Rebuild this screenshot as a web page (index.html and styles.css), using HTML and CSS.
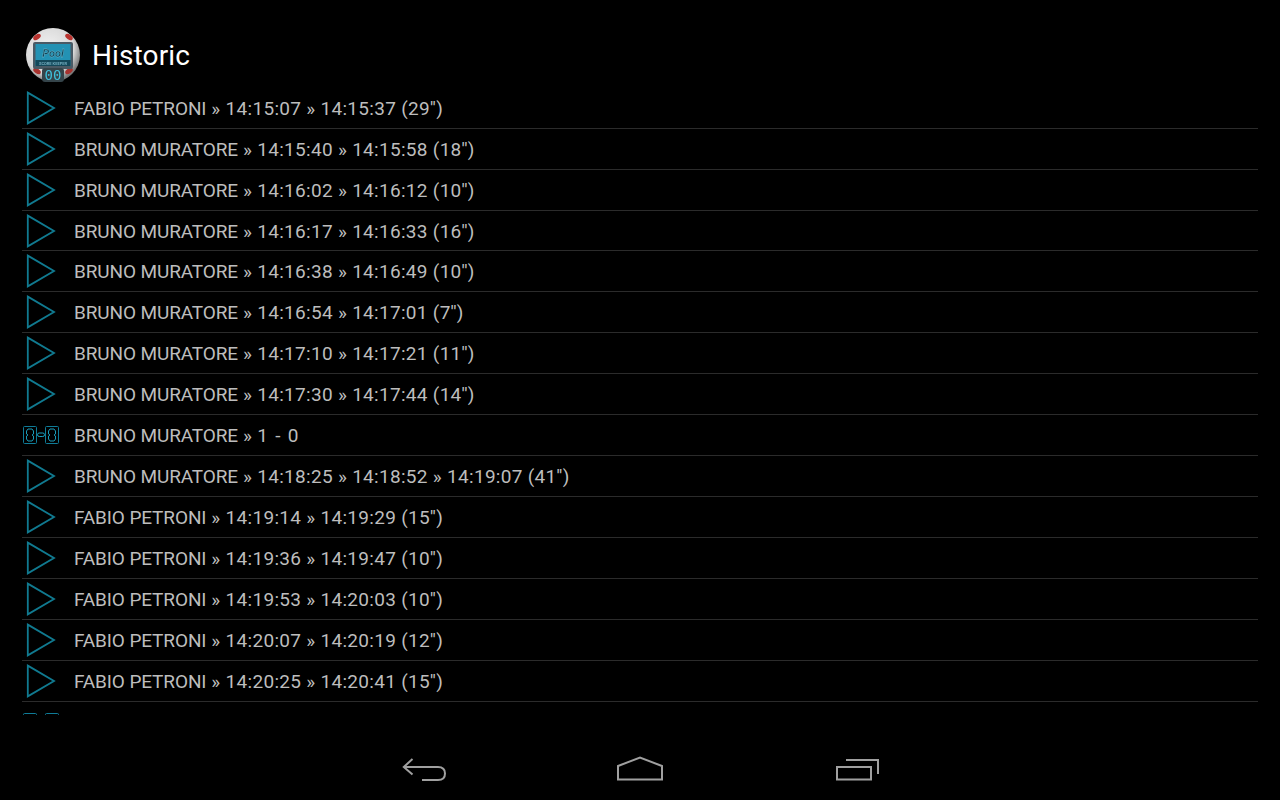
FILE: index.html
```html
<!DOCTYPE html>
<html lang="en">
<head>
  <meta charset="UTF-8">
  <title>Historic</title>
  <link rel="stylesheet" href="styles.css">
</head>
<body>
  <svg class="defs" width="0" height="0">
    <symbol id="play" viewBox="0 0 30 34">
      <path d="M1.8 1.6 L28 17 L1.8 32.4 Z" fill="none" stroke="#107a90" stroke-width="1.8"/>
    </symbol>
    <symbol id="score" viewBox="0 0 36 18">
      <g fill="none" stroke="#0f7c98" stroke-width="1">
        <rect x="0.5" y="0.5" width="13" height="17" rx="1"/>
        <path d="M5 3 H9 L10.5 5 V8 L9 9 L10.5 10 V13 L9 15 H5 L3.5 13 V10 L5 9 L3.5 8 V5 Z" stroke="#1a9bb8"/>
        <rect x="22.5" y="0.5" width="13" height="17" rx="1"/>
        <path d="M27 3 H31 L32.5 5 V8 L31 9 L32.5 10 V13 L31 15 H27 L25.5 13 V10 L27 9 L25.5 8 V5 Z" stroke="#1a9bb8"/>
        <rect x="14.5" y="7" width="7" height="3.5" rx="1.7" stroke="#1aa0bf"/>
      </g>
    </symbol>
  </svg>

  <header class="action-bar">
    <svg class="logo" width="56" height="56" viewBox="0 0 56 56">
      <defs>
        <radialGradient id="ball" cx="42%" cy="38%" r="62%">
          <stop offset="0" stop-color="#f2f2f2"/>
          <stop offset="0.75" stop-color="#d8d8d8"/>
          <stop offset="1" stop-color="#777"/>
        </radialGradient>
      </defs>
      <circle cx="28" cy="28" r="27" fill="url(#ball)"/>
      <ellipse cx="12" cy="10" rx="4.2" ry="2.5" fill="#b8322e" transform="rotate(-35 12 10)"/>
      <ellipse cx="44" cy="10" rx="4.2" ry="2.5" fill="#b8322e" transform="rotate(35 44 10)"/>
      <ellipse cx="12" cy="44" rx="4.2" ry="2.5" fill="#a8322e" transform="rotate(35 12 44)"/>
      <ellipse cx="44" cy="44" rx="4.2" ry="2.5" fill="#a8322e" transform="rotate(-35 44 44)"/>
      <rect x="8" y="15" width="40" height="27" rx="2" fill="#4a5a65"/>
      <rect x="10.5" y="17" width="35" height="22" fill="#2392b4"/>
      <rect x="10.5" y="33" width="35" height="6" fill="#14485a"/>
      <text x="28" y="30" class="logo-title" text-anchor="middle">Pool</text>
      <text x="28" y="38" class="logo-sub" text-anchor="middle">SCORE KEEPER</text>
      <rect x="17" y="41" width="22" height="14" rx="3" fill="#35444a"/>
      <text x="28" y="53" class="logo-digits" text-anchor="middle">00</text>
    </svg>
    <h1>Historic</h1>
  </header>

  <ul class="history">
    <li><svg class="ico"><use href="#play"/></svg><span class="txt"><span class="name">FABIO PETRONI</span> » 14:15:07 » 14:15:37 (29'')</span></li>
    <li><svg class="ico"><use href="#play"/></svg><span class="txt"><span class="name">BRUNO MURATORE</span> » 14:15:40 » 14:15:58 (18'')</span></li>
    <li><svg class="ico"><use href="#play"/></svg><span class="txt"><span class="name">BRUNO MURATORE</span> » 14:16:02 » 14:16:12 (10'')</span></li>
    <li><svg class="ico"><use href="#play"/></svg><span class="txt"><span class="name">BRUNO MURATORE</span> » 14:16:17 » 14:16:33 (16'')</span></li>
    <li><svg class="ico"><use href="#play"/></svg><span class="txt"><span class="name">BRUNO MURATORE</span> » 14:16:38 » 14:16:49 (10'')</span></li>
    <li><svg class="ico"><use href="#play"/></svg><span class="txt"><span class="name">BRUNO MURATORE</span> » 14:16:54 » 14:17:01 (7'')</span></li>
    <li><svg class="ico"><use href="#play"/></svg><span class="txt"><span class="name">BRUNO MURATORE</span> » 14:17:10 » 14:17:21 (11'')</span></li>
    <li><svg class="ico"><use href="#play"/></svg><span class="txt"><span class="name">BRUNO MURATORE</span> » 14:17:30 » 14:17:44 (14'')</span></li>
    <li><svg class="ico ico-score"><use href="#score"/></svg><span class="txt"><span class="name">BRUNO MURATORE</span> » <span class="result">1 - 0</span></span></li>
    <li><svg class="ico"><use href="#play"/></svg><span class="txt"><span class="name">BRUNO MURATORE</span> » 14:18:25 » 14:18:52 » 14:19:07 (41'')</span></li>
    <li><svg class="ico"><use href="#play"/></svg><span class="txt"><span class="name">FABIO PETRONI</span> » 14:19:14 » 14:19:29 (15'')</span></li>
    <li><svg class="ico"><use href="#play"/></svg><span class="txt"><span class="name">FABIO PETRONI</span> » 14:19:36 » 14:19:47 (10'')</span></li>
    <li><svg class="ico"><use href="#play"/></svg><span class="txt"><span class="name">FABIO PETRONI</span> » 14:19:53 » 14:20:03 (10'')</span></li>
    <li><svg class="ico"><use href="#play"/></svg><span class="txt"><span class="name">FABIO PETRONI</span> » 14:20:07 » 14:20:19 (12'')</span></li>
    <li><svg class="ico"><use href="#play"/></svg><span class="txt"><span class="name">FABIO PETRONI</span> » 14:20:25 » 14:20:41 (15'')</span></li>
    <li><svg class="ico ico-score"><use href="#score"/></svg></li>
  </ul>

  <nav class="nav-bar">
    <svg width="46" height="26" viewBox="0 0 46 26" fill="none" stroke="#a0a0a0" stroke-width="2">
      <path d="M10.5 3 L1.8 11 L10.5 18.5"/>
      <path d="M2 11 H36 Q43 11 43 17.5 Q43 24 36 24 H20"/>
    </svg>
    <svg width="48" height="26" viewBox="0 0 48 26" fill="none" stroke="#a0a0a0" stroke-width="2">
      <path d="M2 23.5 V10 L24 1.5 L46 10 V23.5 Z"/>
    </svg>
    <svg width="48" height="26" viewBox="0 0 48 26" fill="none" stroke="#a0a0a0" stroke-width="2">
      <rect x="5" y="11" width="34" height="12.5"/>
      <path d="M14 4 H46 V18"/>
    </svg>
  </nav>
</body>
</html>
```

FILE: styles.css
```css
html, body {
  margin: 0;
  height: 100%;
}
body {
  background-color: #000;
  font-family: Roboto, sans-serif;
  display: flex;
  flex-direction: column;
  height: 800px;
  overflow: hidden;
}
.defs {
  position: absolute;
}
.action-bar {
  display: flex;
  align-items: center;
  gap: 11px;
  height: 87.8px;
  box-sizing: border-box;
  padding: 27px 0 5px 25px;
  flex: none;
}
.action-bar h1 {
  margin: 2px 0 0;
  font-size: 28px;
  font-weight: 400;
  letter-spacing: 0.12px;
  color: #fff;
}
.logo {
  filter: blur(0.4px);
}
.logo-title {
  font: italic 700 11px Roboto, sans-serif;
  fill: #0f4558;
  stroke: #7fc0d4;
  stroke-width: 0.3px;
}
.logo-sub {
  font: 700 4px Roboto, sans-serif;
  fill: #6fa9bb;
}
.logo-digits {
  font: 400 14px "DejaVu Sans Mono", monospace;
  fill: #3fc0dc;
}
.history {
  list-style: none;
  margin: 0 22px;
  padding: 0;
  height: 627px;
  overflow: hidden;
  flex: none;
}
.history li {
  display: flex;
  align-items: center;
  height: 40.93px;
  box-sizing: border-box;
  border-bottom: 1px solid #2b2b2b;
  color: #bdbdbd;
  font-size: 19px;
  letter-spacing: 0.3px;
}
.history li:last-child {
  border-bottom: none;
}
.history li .txt {
  padding-top: 1px;
}
.history li .name {
  letter-spacing: -0.12px;
}
.history li .result {
  word-spacing: 2px;
}
.ico {
  width: 30px;
  height: 34px;
  margin: 0 18px 0 4px;
  flex: none;
}
.ico-score {
  width: 36px;
  height: 18px;
  margin: 0 15px 0 1px;
}
.nav-bar {
  display: flex;
  justify-content: center;
  align-items: center;
  gap: 168px;
  padding: 41.2px 0 0 2px;
}
```
